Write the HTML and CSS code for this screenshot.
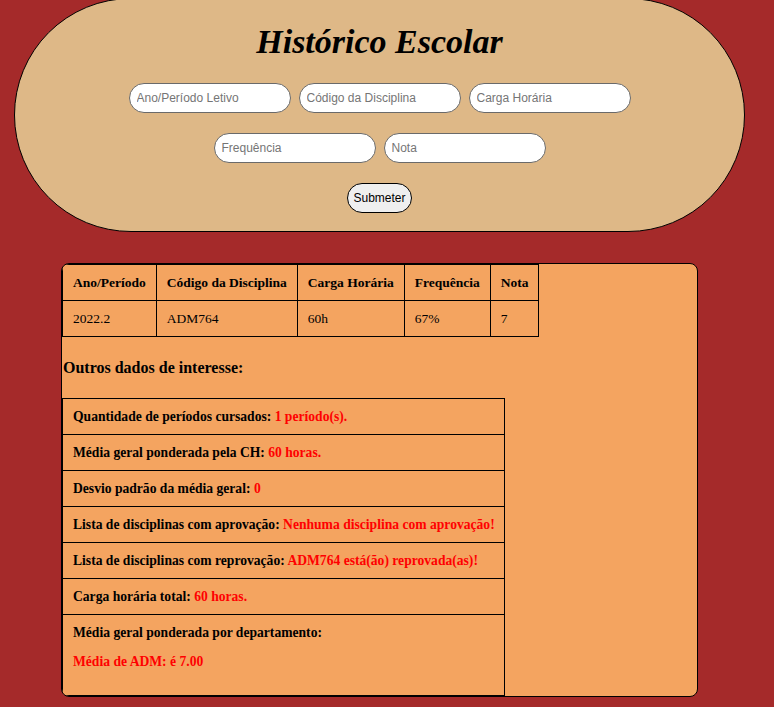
FILE: index.html
```html
<!DOCTYPE html>
<html lang="pt-BR">
<head>
<meta charset="utf-8">
<title>Histórico Escolar</title>
<link rel="stylesheet" href="styles.css">
</head>
<body>
<header class="hero">
  <h1 class="title">Histórico Escolar</h1>
  <form class="form">
    <div class="row">
      <input class="field" type="text" placeholder="Ano/Período Letivo">
      <input class="field" type="text" placeholder="Código da Disciplina">
      <input class="field" type="text" placeholder="Carga Horária">
    </div>
    <div class="row">
      <input class="field" type="text" placeholder="Frequência">
      <input class="field" type="text" placeholder="Nota">
    </div>
    <div class="row">
      <button class="submit" type="button">Submeter</button>
    </div>
  </form>
</header>
<main class="panel">
  <table class="grades">
    <thead>
      <tr><th>Ano/Período</th><th>Código da Disciplina</th><th>Carga Horária</th><th>Frequência</th><th>Nota</th></tr>
    </thead>
    <tbody>
      <tr><td>2022.2</td><td>ADM764</td><td>60h</td><td>67%</td><td>7</td></tr>
    </tbody>
  </table>
  <h4 class="subtitle">Outros dados de interesse:</h4>
  <ul class="stats">
    <li>Quantidade de períodos cursados: <span class="val">1 período(s).</span></li>
    <li>Média geral ponderada pela CH: <span class="val">60 horas.</span></li>
    <li>Desvio padrão da média geral: <span class="val">0</span></li>
    <li>Lista de disciplinas com aprovação: <span class="val">Nenhuma disciplina com aprovação!</span></li>
    <li>Lista de disciplinas com reprovação: <span class="val">ADM764 está(ão) reprovada(as)!</span></li>
    <li>Carga horária total: <span class="val">60 horas.</span></li>
    <li>Média geral ponderada por departamento:
      <p class="val dept">Média de ADM: é 7.00</p>
    </li>
  </ul>
</main>
</body>
</html>
```
FILE: styles.css
```css
html, body {
  background: #a52a2a;
}
body {
  margin: 0;
  padding: 0 0 8px;
  font-family: "Liberation Serif", "Times New Roman", serif;
  color: #000;
}
.hero {
  box-sizing: border-box;
  width: 731px;
  height: 234px;
  margin: -2px 0 0 14px;
  padding: 23px 0 0;
  background: #deb887;
  border: 1px solid #000;
  border-radius: 117px;
  display: flex;
  flex-direction: column;
  align-items: center;
}
.title {
  margin: 0 0 21px;
  font-size: 34px;
  line-height: 40px;
  font-style: italic;
  font-weight: bold;
}
.form {
  display: flex;
  flex-direction: column;
  gap: 20px;
  align-items: center;
}
.row {
  display: flex;
  gap: 8px;
  justify-content: center;
}
.field {
  box-sizing: border-box;
  width: 162px;
  height: 30px;
  margin: 0;
  padding: 0 7px;
  border: 1px solid #6a6a6a;
  border-radius: 15px;
  background: #fff;
  font-family: "Liberation Sans", Arial, sans-serif;
  font-size: 12px;
  color: #000;
}
.field::placeholder {
  color: #757575;
}
.submit {
  box-sizing: border-box;
  width: 65px;
  height: 30px;
  margin: 0;
  padding: 0;
  border: 1px solid #000;
  border-radius: 15px;
  background: #efefef;
  font-family: "Liberation Sans", Arial, sans-serif;
  font-size: 12px;
  color: #000;
}
.panel {
  box-sizing: border-box;
  width: 637px;
  margin: 31px 0 0 61px;
  background: #f4a460;
  border: 1px solid #000;
  border-radius: 8px;
  overflow: hidden;
}
.grades {
  border-collapse: collapse;
  border: 1px solid #000;
  font-size: 13.5px;
}
.grades th,
.grades td {
  border: 1px solid #000;
  padding: 10px;
  text-align: left;
  line-height: 15px;
}
.subtitle {
  margin: 22px 0 21px 1px;
  font-size: 16px;
  line-height: 18px;
}
.stats {
  box-sizing: border-box;
  width: 443px;
  margin: 0;
  padding: 0;
  list-style: none;
  border: 1px solid #000;
  font-size: 13.6px;
  font-weight: bold;
}
.stats li {
  padding: 10px 6px 10px 10px;
  line-height: 15px;
  border-bottom: 1px solid #000;
  white-space: nowrap;
}
.stats li:last-child {
  border-bottom: 0;
  white-space: normal;
}
.val {
  color: #ff0000;
}
.dept {
  margin: 14px 0 16px;
}
```
